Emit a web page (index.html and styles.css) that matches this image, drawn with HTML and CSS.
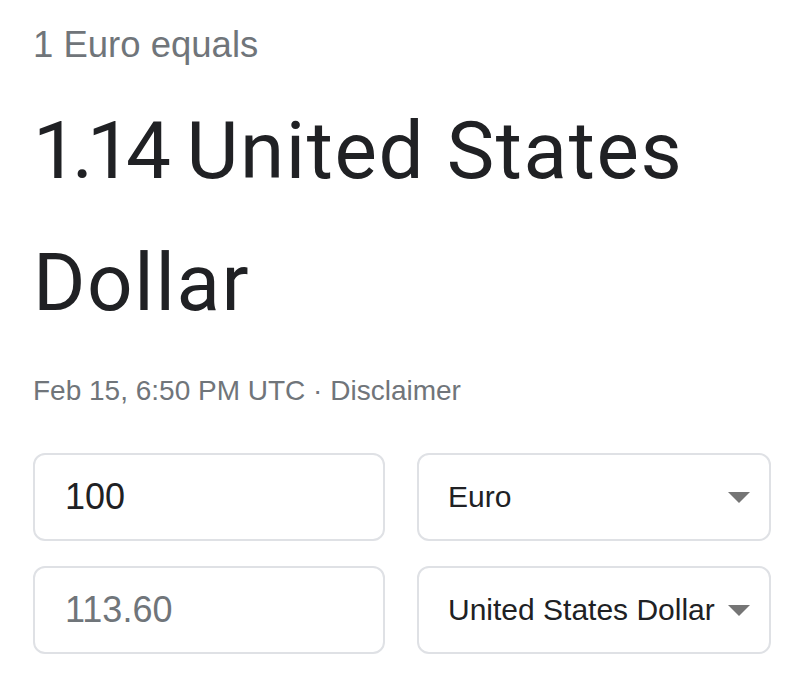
FILE: index.html
```html
<!DOCTYPE html>
<html lang="en">
<head>
<meta charset="utf-8">
<title>Currency converter</title>
<link rel="stylesheet" href="styles.css">
</head>
<body>
<div class="card">
  <div class="lead">1 Euro equals</div>
  <div class="result"><span class="rate">1.14</span> <span class="word">United States</span> <span class="word">Dollar</span></div>
  <div class="meta">Feb 15, 6:50 PM UTC · <span class="link">Disclaimer</span></div>
  <div class="grid">
    <div class="field"><span class="amount">100</span></div>
    <div class="field select"><span class="cur">Euro</span><span class="arrow"></span></div>
    <div class="field"><span class="amount muted">113.60</span></div>
    <div class="field select"><span class="cur">United States Dollar</span><span class="arrow"></span></div>
  </div>
</div>
</body>
</html>
```

FILE: styles.css
```css
html, body {
  margin: 0;
  padding: 0;
  background: #ffffff;
}
.card {
  padding: 25px 0 0 33px;
  font-family: "Liberation Sans", Arial, sans-serif;
}
.lead {
  font-size: 36.5px;
  line-height: 40px;
  color: #70757a;
}
.result {
  margin-top: 20px;
  width: 700px;
  font-family: Roboto, "Open Sans", sans-serif;
  font-size: 80px;
  line-height: 132px;
  letter-spacing: 1.6px;
  color: #202124;
}
.rate {
  letter-spacing: -6px;
}
.word {
  white-space: nowrap;
}
.meta {
  margin-top: 27px;
  font-size: 28px;
  line-height: 30px;
  color: #70757a;
}
.grid {
  margin-top: 47px;
  display: grid;
  grid-template-columns: 352px 354px;
  grid-auto-rows: 88px;
  column-gap: 32px;
  row-gap: 25px;
}
.field {
  box-sizing: border-box;
  border: 2px solid #dfe1e5;
  border-radius: 12px;
  display: flex;
  align-items: center;
  padding: 0 19px 0 30px;
}
.amount {
  font-size: 36px;
  line-height: 40px;
  color: #202124;
}
.amount.muted {
  color: #70757a;
}
.select {
  justify-content: space-between;
  padding-left: 29px;
}
.cur {
  font-size: 30px;
  line-height: 34px;
  color: #202124;
  white-space: nowrap;
}
.arrow {
  width: 0;
  height: 0;
  border-left: 11px solid transparent;
  border-right: 11px solid transparent;
  border-top: 11px solid #757575;
}
```
